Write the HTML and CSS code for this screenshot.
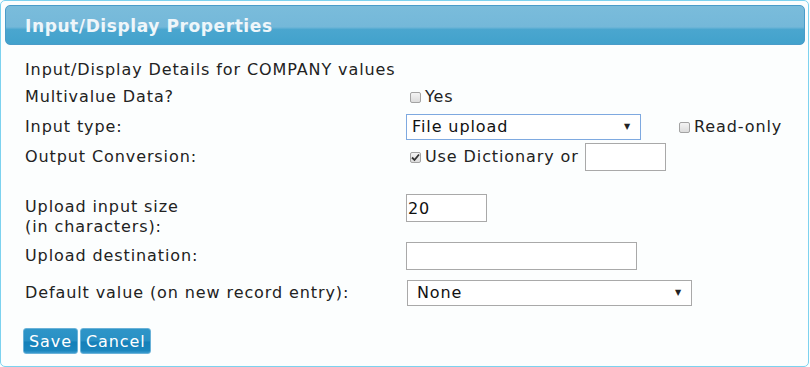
FILE: index.html
```html
<!DOCTYPE html>
<html lang="en">
<head>
    <meta charset="UTF-8">
    <title>Input/Display Properties</title>
    <link rel="stylesheet" href="styles.css">
</head>
<body>
    <div class="panel">
        <div class="panel-header">Input/Display Properties</div>

        <form class="props">
            <table class="props-table">
                <tr class="row-intro">
                    <td colspan="2">Input/Display Details for COMPANY values</td>
                </tr>
                <tr class="row-multi">
                    <td class="lbl">Multivalue Data?</td>
                    <td><label class="chk"><span class="box"></span>Yes</label></td>
                </tr>
                <tr class="row-type">
                    <td class="lbl">Input type:</td>
                    <td>
                        <span class="fake-select type-select focus">File upload<span class="arrow">&#9660;</span></span>
                        <label class="chk readonly"><span class="box"></span>Read-only</label>
                    </td>
                </tr>
                <tr class="row-conv">
                    <td class="lbl">Output Conversion:</td>
                    <td>
                        <label class="chk"><span class="box checked"><svg width="9" height="9" viewBox="0 0 9 9"><path d="M1 4.5 L3.5 7 L8 1.5" fill="none" stroke="#333" stroke-width="1.8"/></svg></span>Use Dictionary or</label>
                        <input type="text" class="txt conv">
                    </td>
                </tr>
                <tr class="spacer"><td colspan="2"></td></tr>
                <tr class="row-size">
                    <td class="lbl">Upload input size<br>(in characters):</td>
                    <td class="size-cell"><input type="text" class="txt size" value="20"></td>
                </tr>
                <tr class="row-dest">
                    <td class="lbl">Upload destination:</td>
                    <td><input type="text" class="txt dest"></td>
                </tr>
                <tr class="row-default">
                    <td class="lbl">Default value (on new record entry):</td>
                    <td><span class="fake-select default-select">None<span class="arrow">&#9660;</span></span></td>
                </tr>
            </table>

            <div class="actions">
                <button type="button" class="btn">Save</button><button type="button" class="btn">Cancel</button>
            </div>
        </form>
    </div>
</body>
</html>
```

FILE: styles.css
```css
body {
    margin: 0;
    background-color: #fcfefe;
    font-family: "DejaVu Sans", Verdana, sans-serif;
    font-size: 16px;
    letter-spacing: 0.9px;
    color: #222;
}

.panel {
    width: 809px;
    height: 367px;
    box-sizing: border-box;
    border: 1px solid #7cd2ef;
    border-radius: 5px;
    padding: 4px 3px 0 4px;
    background-color: #fcfefe;
}

.panel-header {
    height: 40px;
    box-sizing: border-box;
    border: 1px solid #4a9cc9;
    border-radius: 5px;
    background: linear-gradient(to bottom, #7abcdb 0%, #74b8d9 55%, #4aa6cf 62%, #42a2cc 100%);
    color: #eef6fa;
    font-size: 17px;
    font-weight: bold;
    letter-spacing: 0.6px;
    padding: 10px 0 0 19px;
    line-height: 20px;
}

.props {
    padding: 13px 0 0 20px;
}

.props-table {
    border-collapse: collapse;
}

.props-table td {
    padding: 0;
    vertical-align: middle;
    line-height: 20px;
}

.props-table td.lbl {
    width: 381px;
}

.row-intro td { height: 24px; }
.row-multi td { height: 30px; }
.row-type td { height: 30px; }
.row-conv td { height: 30px; }
.spacer td { height: 20px; }
.row-size td { height: 50px; }
.row-dest td { height: 25px; }
.row-default td { height: 46px; }

.props-table td.size-cell {
    vertical-align: top;
    padding-top: 2px;
    height: 48px;
}

.chk {
    display: inline-flex;
    align-items: center;
    vertical-align: middle;
}

.box {
    display: inline-flex;
    align-items: center;
    justify-content: center;
    width: 11px;
    height: 11px;
    box-sizing: border-box;
    border: 1px solid #a3a3a3;
    border-radius: 2px;
    background: linear-gradient(to bottom, #f4f4f4, #dcdcdc);
    margin: 0 4px 0 4px;
}

.readonly {
    margin-left: 32px;
}

.readonly .box {
    margin-left: 0;
}

.fake-select {
    display: inline-flex;
    justify-content: space-between;
    align-items: center;
    box-sizing: border-box;
    border: 1px solid #a9a9a9;
    background: #fff;
    color: #111;
    padding: 0 9px 0 5px;
    vertical-align: middle;
}

.fake-select .arrow {
    font-size: 8px;
    color: #222;
}

.type-select {
    width: 235px;
    height: 26px;
}

.type-select.focus {
    border-color: #7ea9e0;
}

.txt {
    box-sizing: border-box;
    border: 1px solid #a9a9a9;
    background: #fff;
    font-family: inherit;
    font-size: 16px;
    letter-spacing: inherit;
    color: #111;
    height: 28px;
    padding: 0 1px;
    vertical-align: middle;
    margin: 0;
}

.conv {
    width: 81px;
    margin-left: 0;
}

.size {
    width: 81px;
}

.dest {
    width: 231px;
}

.default-select {
    width: 285px;
    height: 26px;
    margin-left: 1px;
    padding-left: 9px;
}

.actions {
    margin-top: 12px;
    margin-left: -2px;
    display: flex;
    gap: 2px;
}

.btn {
    font-family: inherit;
    font-size: 16px;
    letter-spacing: inherit;
    color: #fff;
    height: 26px;
    padding: 0 5px;
    margin: 0;
    border: 1px solid #6ab2d8;
    border-radius: 3px;
    background: linear-gradient(to bottom, #2e95c8 0%, #2990c4 48%, #1580b9 55%, #1b86bd 90%, #3b9bcf 100%);
    cursor: pointer;
}
```
